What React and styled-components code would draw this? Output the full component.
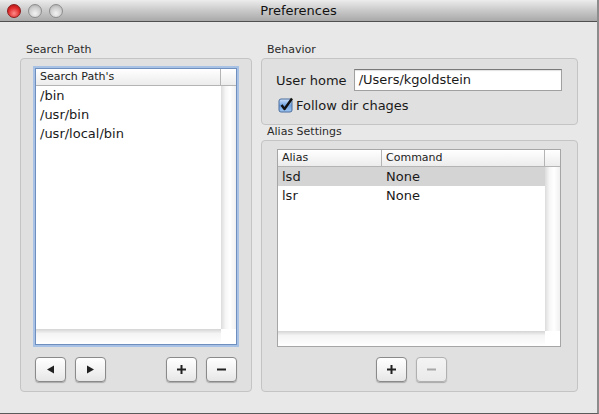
import React from 'react';
import styled, { createGlobalStyle } from 'styled-components';

const GlobalStyle = createGlobalStyle`
	html, body {
		margin: 0;
		padding: 0;
		background: #e8e8e8;
	}
	body {
		font-family: "DejaVu Sans", "Noto Sans", sans-serif;
		color: #1a1a1a;
	}
`;

const Window = styled.div`
	width: 599px;
	height: 414px;
	box-sizing: border-box;
	display: flex;
	flex-direction: column;
	background: #e8e8e8;
	border-right: 2px solid #8c8c8c;
	border-bottom: 1px solid #5a5a5a;
	overflow: hidden;
`;

const TitleBar = styled.div`
	height: 22px;
	flex: none;
	box-sizing: border-box;
	position: relative;
	display: flex;
	align-items: center;
	justify-content: center;
	background: linear-gradient(#ececec, #c9c9c9 50%, #a9a9a9);
	border-bottom: 1px solid #505050;
	font-size: 13px;
	color: #111;
`;

const Lights = styled.div`
	position: absolute;
	left: 7px;
	top: 4px;
	display: flex;
	gap: 7px;
`;

const Light = styled.span`
	width: 14px;
	height: 14px;
	box-sizing: border-box;
	border-radius: 50%;
	border: 1px solid ${(p) => (p.$red ? '#8a1c1c' : '#8d8d8d')};
	background: ${(p) =>
		p.$red
			? 'radial-gradient(circle at 50% 70%, #ff8a8a, #e02a2a 55%, #a31010)'
			: 'radial-gradient(circle at 50% 70%, #f2f2f2, #cfcfcf 55%, #a5a5a5)'};
`;

const Content = styled.div`
	flex: 1;
	display: grid;
	grid-template-columns: 232px 317px;
	column-gap: 9px;
	padding: 21px 19px 21px 20px;
`;

const Column = styled.div`
	display: flex;
	flex-direction: column;
	min-height: 0;
`;

const Caption = styled.div`
	font-size: 11px;
	line-height: 14px;
	height: 14px;
	padding-left: 6px;
	margin-top: ${(p) => p.$top || 0}px;
	margin-bottom: 1px;
	color: #2a2a2a;
`;

const Group = styled.div`
	box-sizing: border-box;
	border: 1px solid #c4c4c4;
	border-radius: 4px;
	background: #e0e0e0;
	display: flex;
	flex-direction: column;
	flex: ${(p) => (p.$grow ? 1 : 'none')};
	padding: ${(p) => p.$pad};
	min-height: 0;
`;

const ListFrame = styled.div`
	flex: 1;
	display: flex;
	flex-direction: column;
	background: #fff;
	border: 1px solid ${(p) => (p.$focus ? '#6f8fbf' : '#a6a6a6')};
	box-shadow: ${(p) => (p.$focus ? '0 0 0 2px #a8c2e6' : 'none')};
	margin: ${(p) => (p.$focus ? '2px' : '0')};
	min-height: 0;
`;

const HeaderRow = styled.div`
	display: flex;
	height: 16px;
	flex: none;
	background: linear-gradient(#ffffff, #ececec);
	border-bottom: 1px solid #b4b4b4;
	font-size: 11px;
	line-height: 16px;
`;

const HeaderCell = styled.div`
	box-sizing: border-box;
	width: ${(p) => (p.$w ? `${p.$w}px` : 'auto')};
	flex: ${(p) => (p.$w ? 'none' : 1)};
	padding-left: 4px;
	border-right: 1px solid #b4b4b4;
	color: #222;
`;

const Corner = styled.div`
	width: 15px;
	flex: none;
`;

const Body = styled.div`
	flex: 1;
	display: flex;
	min-height: 0;
`;

const Rows = styled.div`
	flex: 1;
	display: flex;
	flex-direction: column;
`;

const VScroll = styled.div`
	width: 15px;
	flex: none;
	background: linear-gradient(90deg, #dcdcdc, #f6f6f6 30%, #ffffff 60%, #f0f0f0);
`;

const HScroll = styled.div`
	height: 15px;
	flex: none;
	display: flex;
	background: linear-gradient(#d4d4d4, #f4f4f4 30%, #ffffff);
`;

const HCorner = styled.div`
	margin-left: auto;
	width: 15px;
	background: #fff;
`;

const Row = styled.div`
	display: flex;
	height: 19px;
	align-items: center;
	font-size: 13px;
	background: ${(p) => (p.$selected ? '#d4d4d4' : 'transparent')};
`;

const Cell = styled.div`
	box-sizing: border-box;
	width: ${(p) => (p.$w ? `${p.$w}px` : 'auto')};
	flex: ${(p) => (p.$w ? 'none' : 1)};
	padding-left: 4px;
`;

const ButtonRow = styled.div`
	display: flex;
	align-items: center;
	justify-content: ${(p) => p.$justify || 'center'};
	gap: 9px;
	margin-top: 10px;
	padding: ${(p) => p.$pad || '0'};
	flex: none;
`;

const ButtonPair = styled.div`
	display: flex;
	gap: 9px;
`;

const Button = styled.button`
	width: 31px;
	height: 25px;
	box-sizing: border-box;
	padding: 0;
	display: flex;
	align-items: center;
	justify-content: center;
	border: 1px solid ${(p) => (p.disabled ? '#b0b0b0' : '#8a8a8a')};
	border-radius: 4px;
	background: ${(p) =>
		p.disabled
			? 'linear-gradient(#f4f4f4, #e9e9e9)'
			: 'linear-gradient(#ffffff, #f1f1f1 60%, #e6e6e6)'};
	box-shadow: 0 1px 1px rgba(0, 0, 0, 0.25);
	color: ${(p) => (p.disabled ? '#a8a8a8' : '#222')};
`;

const FieldRow = styled.div`
	display: flex;
	align-items: center;
	gap: 7px;
	font-size: 13px;
`;

const TextField = styled.div`
	flex: 1;
	height: 22px;
	box-sizing: border-box;
	border: 1px solid #a0a0a0;
	border-top-color: #7a7a7a;
	background: #fff;
	box-shadow: inset 0 1px 1px rgba(0, 0, 0, 0.12);
	font-size: 13px;
	line-height: 20px;
	padding-left: 4px;
`;

const CheckRow = styled.div`
	display: flex;
	align-items: center;
	gap: 2px;
	margin-top: 6px;
	margin-left: 2px;
	font-size: 13px;
`;

const Glyph = ({ kind }) => {
	if (kind === 'left') {
		return (
			<svg width="9" height="9" viewBox="0 0 9 9">
				<path d="M1 4.5 L8 0.5 L8 8.5 Z" fill="currentColor" />
			</svg>
		);
	}
	if (kind === 'right') {
		return (
			<svg width="9" height="9" viewBox="0 0 9 9">
				<path d="M8 4.5 L1 0.5 L1 8.5 Z" fill="currentColor" />
			</svg>
		);
	}
	if (kind === 'plus') {
		return (
			<svg width="9" height="9" viewBox="0 0 9 9">
				<path d="M3.5 0 H5.5 V3.5 H9 V5.5 H5.5 V9 H3.5 V5.5 H0 V3.5 H3.5 Z" fill="currentColor" />
			</svg>
		);
	}
	return (
		<svg width="9" height="9" viewBox="0 0 9 9">
			<rect x="0" y="3.5" width="9" height="2" fill="currentColor" />
		</svg>
	);
};

const Checkbox = () => (
	<svg width="16" height="16" viewBox="0 0 16 16">
		<defs>
			<linearGradient id="cb" x1="0" y1="0" x2="0" y2="1">
				<stop offset="0" stopColor="#cfe3fb" />
				<stop offset="0.5" stopColor="#6fa2e0" />
				<stop offset="1" stopColor="#9fc6f2" />
			</linearGradient>
		</defs>
		<rect x="1" y="2" width="13" height="13" rx="2" fill="url(#cb)" stroke="#4a6d9c" />
		<path d="M3.5 8 L6.5 12 L14 1.5" fill="none" stroke="#111" strokeWidth="2.4" strokeLinejoin="round" />
	</svg>
);

const searchPaths = ['/bin', '/usr/bin', '/usr/local/bin'];
const aliases = [
	{ name: 'lsd', command: 'None', selected: true },
	{ name: 'lsr', command: 'None' },
];

export default function App() {
	return (
		<>
			<GlobalStyle />
			<Window>
				<TitleBar>
					<Lights>
						<Light $red />
						<Light />
						<Light />
					</Lights>
					Preferences
				</TitleBar>
				<Content>
					<Column>
						<Caption>Search Path</Caption>
						<Group $grow $pad="7px 12px 9px">
							<ListFrame $focus>
								<HeaderRow>
									<HeaderCell>Search Path's</HeaderCell>
									<Corner />
								</HeaderRow>
								<Body>
									<Rows>
										{searchPaths.map((p) => (
											<Row key={p}>
												<Cell>{p}</Cell>
											</Row>
										))}
									</Rows>
									<VScroll />
								</Body>
								<HScroll>
									<HCorner />
								</HScroll>
							</ListFrame>
							<ButtonRow $justify="space-between" $pad="0 2px">
								<ButtonPair>
									<Button><Glyph kind="left" /></Button>
									<Button><Glyph kind="right" /></Button>
								</ButtonPair>
								<ButtonPair>
									<Button><Glyph kind="plus" /></Button>
									<Button><Glyph kind="minus" /></Button>
								</ButtonPair>
							</ButtonRow>
						</Group>
					</Column>
					<Column>
						<Caption>Behavior</Caption>
						<Group $pad="10px 15px 11px 14px">
							<FieldRow>
								<span>User home</span>
								<TextField>/Users/kgoldstein</TextField>
							</FieldRow>
							<CheckRow>
								<Checkbox />
								<span>Follow dir chages</span>
							</CheckRow>
						</Group>
						<Caption $top={0}>Alias Settings</Caption>
						<Group $grow $pad="8px 16px 9px 15px">
							<ListFrame>
								<HeaderRow>
									<HeaderCell $w={104}>Alias</HeaderCell>
									<HeaderCell>Command</HeaderCell>
									<Corner />
								</HeaderRow>
								<Body>
									<Rows>
										{aliases.map((a) => (
											<Row key={a.name} $selected={a.selected}>
												<Cell $w={104}>{a.name}</Cell>
												<Cell>{a.command}</Cell>
											</Row>
										))}
									</Rows>
									<VScroll />
								</Body>
								<HScroll>
									<HCorner />
								</HScroll>
							</ListFrame>
							<ButtonRow $pad="0 16px 0 0">
								<Button><Glyph kind="plus" /></Button>
								<Button disabled><Glyph kind="minus" /></Button>
							</ButtonRow>
						</Group>
					</Column>
				</Content>
			</Window>
		</>
	);
}
